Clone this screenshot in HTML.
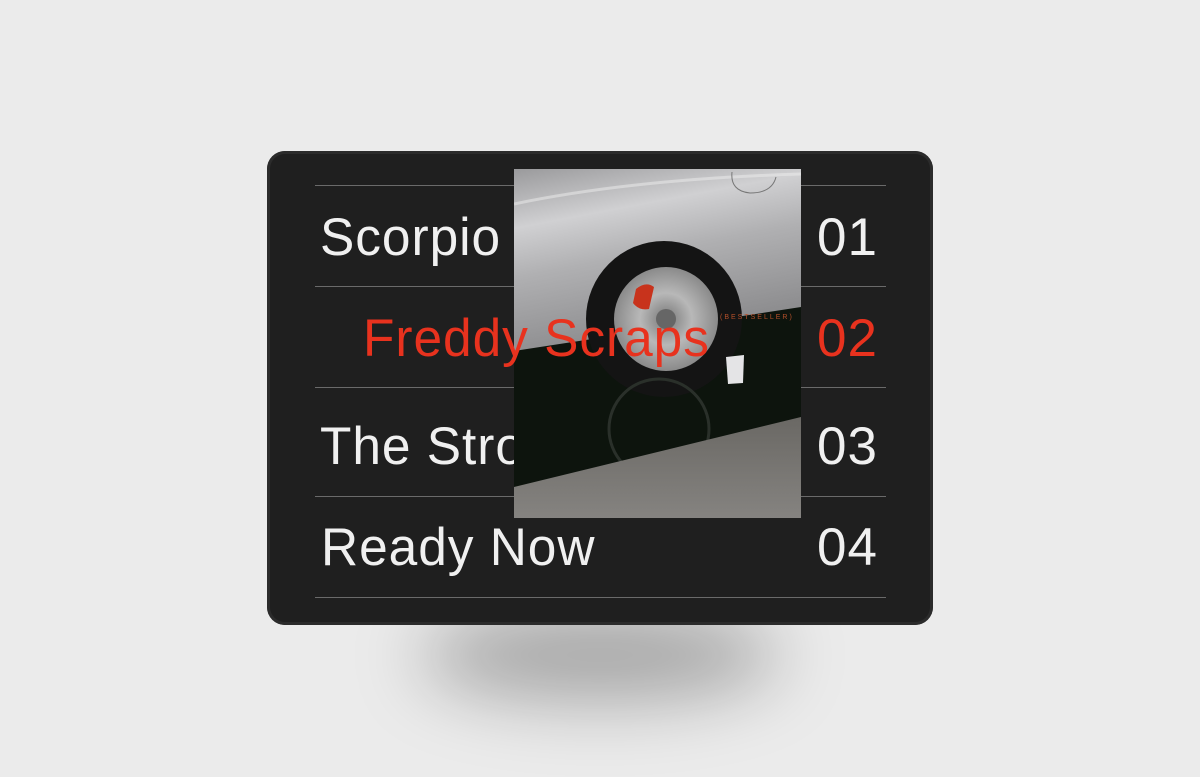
<!DOCTYPE html>
<html><head><meta charset="utf-8"><style>
html,body{margin:0;padding:0}
body{width:1200px;height:777px;background:#ebebeb;position:relative;overflow:hidden;font-family:"Liberation Sans",sans-serif}
.shadow{position:absolute;left:420px;top:610px;width:360px;height:90px;border-radius:50%;background:rgba(0,0,0,0.3);filter:blur(35px)}
.card{position:absolute;left:267px;top:151px;width:666px;height:474px;border-radius:18px;background:#1f1f1f;box-shadow:inset 0 0 0 3px #2b2b2b}
.line{position:absolute;left:315px;width:571px;height:1px;background:#6a6a6a}
.t{position:absolute;color:#f0f0f0;font-size:53px;line-height:1;white-space:nowrap;letter-spacing:1px;transform:scaleX(0.97);transform-origin:left}
.n{position:absolute;right:322px;color:#f0f0f0;font-size:53px;line-height:1;letter-spacing:1px}
.red{color:#e8321e}
.photo{position:absolute;left:514px;top:169px;width:287px;height:349px}
.best{position:absolute;left:720px;top:314px;font-size:7px;letter-spacing:2px;color:#b5502a}
</style></head><body>
<div class="shadow"></div>
<div class="card"></div>
<div class="line" style="top:185px"></div>
<div class="line" style="top:286px"></div>
<div class="line" style="top:387px"></div>
<div class="line" style="top:496px"></div>
<div class="line" style="top:597px"></div>
<div class="t" style="left:320px;top:211px">Scorpio</div>
<div class="t" style="left:320px;top:420px">The Stro</div>
<div class="t" style="left:321px;top:521px">Ready Now</div>
<div class="n" style="top:211px">01</div>
<div class="n" style="top:420px">03</div>
<div class="n" style="top:521px">04</div>
<svg class="photo" viewBox="0 0 287 349">
<defs>
<linearGradient id="body" x1="0" y1="0" x2="0.3" y2="1">
<stop offset="0" stop-color="#9a9a9c"/><stop offset="0.3" stop-color="#d0d0d2"/><stop offset="0.55" stop-color="#b0b0b2"/><stop offset="1" stop-color="#8a8a8c"/></linearGradient>
<linearGradient id="gr" x1="0" y1="0" x2="0" y2="1"><stop offset="0" stop-color="#6a6864"/><stop offset="1" stop-color="#858380"/></linearGradient>
<radialGradient id="rim"><stop offset="0" stop-color="#777"/><stop offset="0.5" stop-color="#b8b8b8"/><stop offset="1" stop-color="#8a8a8a"/></radialGradient>
</defs>
<rect width="287" height="349" fill="#0d140d"/>
<polygon points="0,0 287,0 287,138 0,182" fill="url(#body)"/>
<path d="M0,35 Q120,10 287,5" stroke="#eee" stroke-width="3" fill="none" opacity="0.5"/>
<path d="M218,3 Q216,22 236,24 Q258,24 262,8" stroke="#777" fill="none"/>
<circle cx="150" cy="150" r="78" fill="#141414"/>
<circle cx="152" cy="150" r="52" fill="url(#rim)"/>
<circle cx="152" cy="150" r="10" fill="#666"/>
<path d="M122,120 q10,-8 18,-2 l-5,22 q-10,2 -16,-6z" fill="#c8331c"/>
<circle cx="145" cy="260" r="50" fill="none" stroke="#2a302a" stroke-width="3"/>
<polygon points="0,318 287,248 287,349 0,349" fill="url(#gr)"/>
<path d="M212,188 L230,186 L229,214 L214,215z" fill="#e4e4e6"/>
</svg>
<div class="t red" style="left:363px;top:312px">Freddy Scraps</div>
<div class="best">(BESTSELLER)</div>
<div class="n red" style="top:312px">02</div>
</body></html>
